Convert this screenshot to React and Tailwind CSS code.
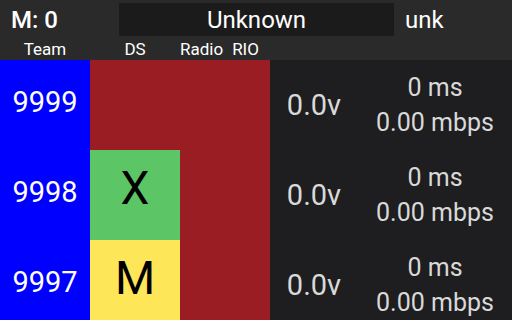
import React from 'react';

const rows = [
  { team: '9999', ds: null },
  { team: '9998', ds: 'X' },
  { team: '9997', ds: 'M' },
];

const dsColors = {
  X: 'bg-[#5cc565]',
  M: 'bg-[#fde758]',
};

function Row({ team, ds }) {
  return (
    <div className="flex h-[90px] shrink-0">
      <div className="w-[90px] bg-[#0000fe] flex items-center justify-center pb-[5px] text-white text-[29px] leading-none">
        {team}
      </div>
      <div className={`w-[90px] flex items-center justify-center pb-[14px] text-black text-[46px] leading-none ${ds ? dsColors[ds] : 'bg-[#9b1d24]'}`}>
        {ds}
      </div>
      <div className="w-[90px] bg-[#9b1d24]" />
      <div className="flex-1 flex bg-[#1e1e20] text-[#d9d9d9]">
        <div className="w-[88px] flex items-center justify-center text-[29px] leading-none">
          0.0v
        </div>
        <div className="ml-auto w-[154px] flex flex-col items-center justify-center text-[25px] leading-[35px]">
          <span>0 ms</span>
          <span>0.00 mbps</span>
        </div>
      </div>
    </div>
  );
}

export default function App() {
  return (
    <div
      className="w-[512px] h-[320px] overflow-hidden bg-[#2a2a2a] flex flex-col"
      style={{ fontFamily: 'Roboto, sans-serif' }}
    >
      {/* Header */}
      <div className="h-[38px] flex items-start shrink-0 text-white text-[24px]">
        <div className="w-[119px] pl-[11px] h-[39px] flex items-center font-medium">M: 0</div>
        <div className="w-[275px] h-[33px] mt-[3px] bg-[#1b1b1b] flex items-center justify-center">
          Unknown
        </div>
        <div className="pl-[11px] h-[39px] flex items-center">unk</div>
      </div>
      <div className="h-[22px] flex items-center shrink-0 text-white text-[17px] leading-none">
        <div className="w-[90px] text-center">Team</div>
        <div className="w-[90px] text-center">DS</div>
        <div className="w-[90px] flex gap-[9px]">
          <span>Radio</span>
          <span>RIO</span>
        </div>
      </div>

      {rows.map((r) => (
        <Row key={r.team} {...r} />
      ))}
    </div>
  );
}
